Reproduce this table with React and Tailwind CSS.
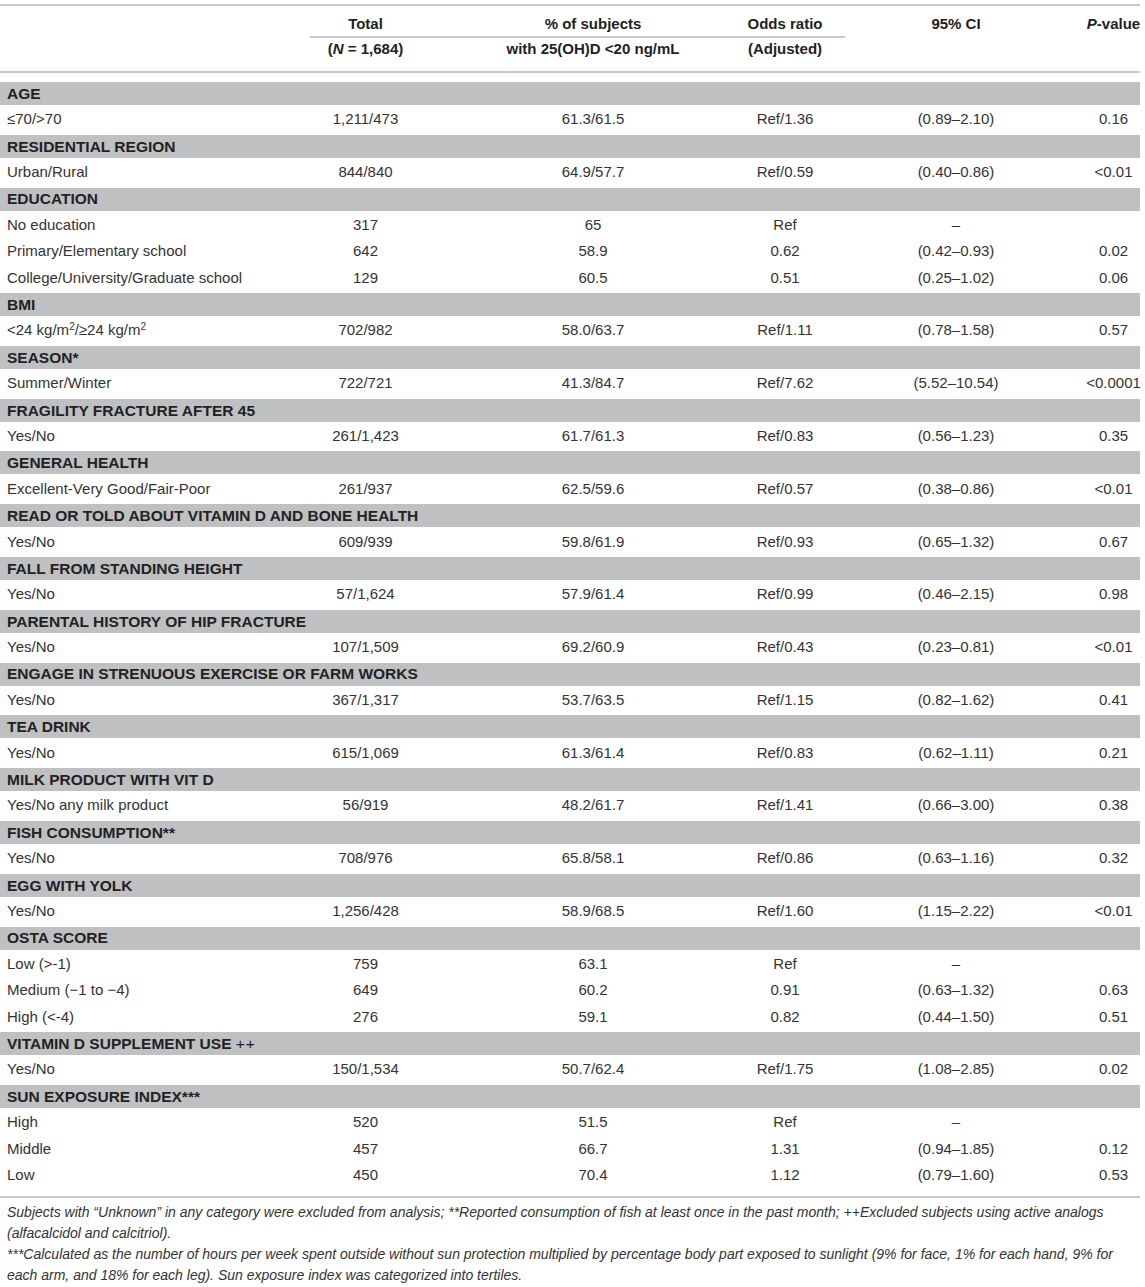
const sections = [
    { title: 'AGE', rows: [['≤70/>70', '1,211/473', '61.3/61.5', 'Ref/1.36', '(0.89–2.10)', '0.16']] },
    { title: 'RESIDENTIAL REGION', rows: [['Urban/Rural', '844/840', '64.9/57.7', 'Ref/0.59', '(0.40–0.86)', '<0.01']] },
    {
        title: 'EDUCATION',
        rows: [
            ['No education', '317', '65', 'Ref', '–', ''],
            ['Primary/Elementary school', '642', '58.9', '0.62', '(0.42–0.93)', '0.02'],
            ['College/University/Graduate school', '129', '60.5', '0.51', '(0.25–1.02)', '0.06'],
        ],
    },
    {
        title: 'BMI',
        rows: [[
            <>&lt;24 kg/m<sup className="text-[10px]">2</sup>/≥24 kg/m<sup className="text-[10px]">2</sup></>,
            '702/982', '58.0/63.7', 'Ref/1.11', '(0.78–1.58)', '0.57',
        ]],
    },
    { title: 'SEASON*', rows: [['Summer/Winter', '722/721', '41.3/84.7', 'Ref/7.62', '(5.52–10.54)', '<0.0001']] },
    { title: 'FRAGILITY FRACTURE AFTER 45', rows: [['Yes/No', '261/1,423', '61.7/61.3', 'Ref/0.83', '(0.56–1.23)', '0.35']] },
    { title: 'GENERAL HEALTH', rows: [['Excellent-Very Good/Fair-Poor', '261/937', '62.5/59.6', 'Ref/0.57', '(0.38–0.86)', '<0.01']] },
    { title: 'READ OR TOLD ABOUT VITAMIN D AND BONE HEALTH', rows: [['Yes/No', '609/939', '59.8/61.9', 'Ref/0.93', '(0.65–1.32)', '0.67']] },
    { title: 'FALL FROM STANDING HEIGHT', rows: [['Yes/No', '57/1,624', '57.9/61.4', 'Ref/0.99', '(0.46–2.15)', '0.98']] },
    { title: 'PARENTAL HISTORY OF HIP FRACTURE', rows: [['Yes/No', '107/1,509', '69.2/60.9', 'Ref/0.43', '(0.23–0.81)', '<0.01']] },
    { title: 'ENGAGE IN STRENUOUS EXERCISE OR FARM WORKS', rows: [['Yes/No', '367/1,317', '53.7/63.5', 'Ref/1.15', '(0.82–1.62)', '0.41']] },
    { title: 'TEA DRINK', rows: [['Yes/No', '615/1,069', '61.3/61.4', 'Ref/0.83', '(0.62–1.11)', '0.21']] },
    { title: 'MILK PRODUCT WITH VIT D', rows: [['Yes/No any milk product', '56/919', '48.2/61.7', 'Ref/1.41', '(0.66–3.00)', '0.38']] },
    { title: 'FISH CONSUMPTION**', rows: [['Yes/No', '708/976', '65.8/58.1', 'Ref/0.86', '(0.63–1.16)', '0.32']] },
    { title: 'EGG WITH YOLK', rows: [['Yes/No', '1,256/428', '58.9/68.5', 'Ref/1.60', '(1.15–2.22)', '<0.01']] },
    {
        title: 'OSTA SCORE',
        rows: [
            ['Low (>-1)', '759', '63.1', 'Ref', '–', ''],
            ['Medium (−1 to −4)', '649', '60.2', '0.91', '(0.63–1.32)', '0.63'],
            ['High (<-4)', '276', '59.1', '0.82', '(0.44–1.50)', '0.51'],
        ],
    },
    {
        title: <>VITAMIN D SUPPLEMENT USE{' '}<span className="font-normal tracking-[1px]">++</span></>,
        rows: [['Yes/No', '150/1,534', '50.7/62.4', 'Ref/1.75', '(1.08–2.85)', '0.02']],
    },
    {
        title: 'SUN EXPOSURE INDEX***',
        rows: [
            ['High', '520', '51.5', 'Ref', '–', ''],
            ['Middle', '457', '66.7', '1.31', '(0.94–1.85)', '0.12'],
            ['Low', '450', '70.4', '1.12', '(0.79–1.60)', '0.53'],
        ],
    },
];

const cols = 'grid grid-cols-[290px_151px_304px_80px_262px_53px]';

function Cell({ children }) {
    return <div className="flex justify-center whitespace-nowrap">{children}</div>;
}

export default function App() {
    return (
        <div
            className="w-[1145px] bg-white pt-[4px] text-[#333] antialiased"
            style={{ fontFamily: '"Liberation Sans", Arial, sans-serif' }}
        >
            <div className="w-[1140px]">
                {/* Header */}
                <div className="h-[2px] bg-[#c9c9c9]" />
                <div className={`${cols} h-[30px] items-end pb-[2px] text-[15px] font-bold leading-[20px] text-[#222]`}>
                    <div />
                    <Cell>Total</Cell>
                    <Cell>% of subjects</Cell>
                    <Cell>Odds ratio</Cell>
                    <Cell>95% CI</Cell>
                    <Cell><span><i>P</i>-value</span></Cell>
                </div>
                <div className="ml-[310px] h-[2px] w-[535px] bg-[#c9c9c9]" />
                <div className={`${cols} h-[33px] pt-[1px] text-[15px] font-bold leading-[20px] text-[#222]`}>
                    <div />
                    <Cell><span>(<i>N</i> = 1,684)</span></Cell>
                    <Cell>with 25(OH)D &lt;20 ng/mL</Cell>
                    <Cell>(Adjusted)</Cell>
                    <div />
                    <div />
                </div>
                <div className="h-[2px] bg-[#c9c9c9]" />
                <div className="h-[7px]" />

                {/* Body */}
                {sections.map((s, i) => (
                    <div key={i}>
                        <div className="h-[26.4px] pt-[2px]">
                            <div className="flex h-[23px] items-center bg-[#bfc0c2] pl-[7px] text-[15.5px] font-bold text-[#222] whitespace-pre">
                                {s.title}
                            </div>
                        </div>
                        {s.rows.map((r, j) => (
                            <div key={j} className={`${cols} h-[26.4px] items-center text-[15px]`}>
                                <div className="pl-[7px] whitespace-nowrap">{r[0]}</div>
                                <Cell>{r[1]}</Cell>
                                <Cell>{r[2]}</Cell>
                                <Cell>{r[3]}</Cell>
                                <Cell>{r[4]}</Cell>
                                <Cell>{r[5]}</Cell>
                            </div>
                        ))}
                    </div>
                ))}

                {/* Footnotes */}
                <div className="mt-[8px] h-[2px] bg-[#c9c9c9]" />
                <div className="pl-[7px] pt-[4px] text-[14px] italic leading-[21px] text-[#333]">
                    <p>
                        Subjects with “Unknown” in any category were excluded from analysis; **Reported consumption of fish at least once in the past month; ++Excluded subjects using active analogs (alfacalcidol and calcitriol).
                    </p>
                    <p>
                        ***Calculated as the number of hours per week spent outside without sun protection multiplied by percentage body part exposed to sunlight (9% for face, 1% for each hand, 9% for each arm, and 18% for each leg). Sun exposure index was categorized into tertiles.
                    </p>
                </div>
            </div>
        </div>
    );
}
